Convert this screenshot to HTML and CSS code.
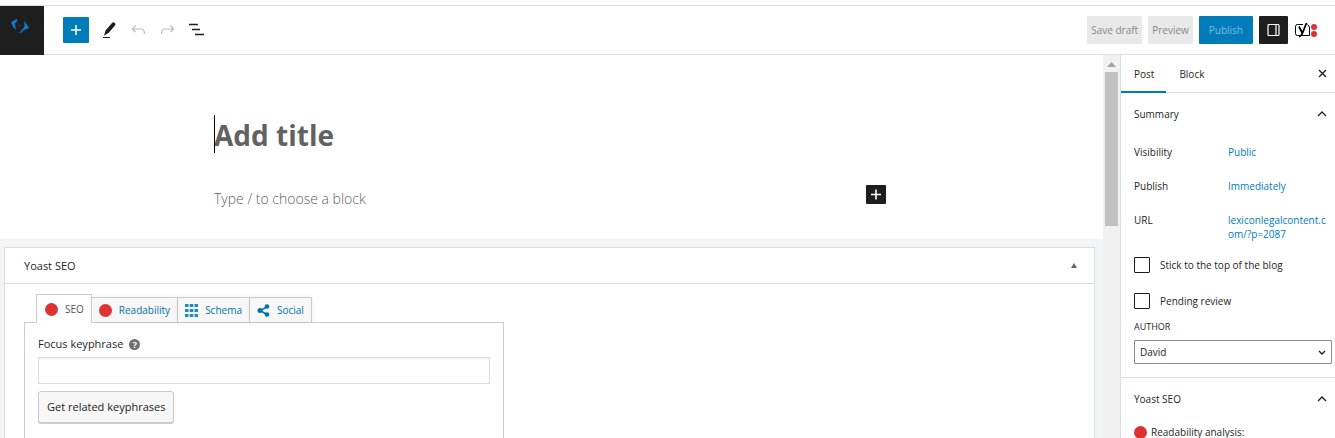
FILE: index.html
```html
<!DOCTYPE html>
<html lang="en">
<head>
    <meta charset="UTF-8">
    <meta name="viewport" content="width=device-width, initial-scale=1.0">
    <title>Add New Post</title>
    <link rel="stylesheet" href="styles.css">
</head>
<body>
    <header class="topbar">
        <a class="logo" href="#" aria-label="View posts">
            <svg width="20" height="16" viewBox="0 0 20 16">
                <path d="M1 4L7 1V3.500L4.500 5.500L6 11.500L3.500 9.500Z" fill="#0d84d0" stroke="#1c4f9c" stroke-width=".5"/>
                <path d="M14.500 3L19 10L14 12L10.500 15L9.500 14.500L11 13L14.500 9Z" fill="#0d84d0" stroke="#1c4f9c" stroke-width=".5"/>
                <path d="M9 7h1v2h-1z" fill="#27348b"/>
            </svg>
        </a>
        <div class="tools">
            <button class="tool add" aria-label="Toggle block inserter">
                <svg width="26" height="26" viewBox="0 0 26 26"><path d="M13 8v10M8 13h10" stroke="#fff" stroke-width="1.500"/></svg>
            </button>
            <button class="tool" aria-label="Tools">
                <svg width="18" height="18" viewBox="0 0 18 18"><path d="M5.500 9.500L12 2Q13 .500 15 2Q16 3 15 4.500L8.500 12L4 14.500Z" fill="#1e1e1e"/><path d="M3 16.500h7" stroke="#1e1e1e"/></svg>
            </button>
            <button class="tool" aria-label="Undo" disabled>
                <svg width="18" height="18" viewBox="0 0 18 18"><path d="M6.500 4.500L3.500 8L6.500 11M4 8h8q3.500 0 3.500 5" fill="none" stroke="#bbb" stroke-width="1.200"/></svg>
            </button>
            <button class="tool" aria-label="Redo" disabled>
                <svg width="18" height="18" viewBox="0 0 18 18"><path d="M12.500 4.500L15.500 8L12.500 11M15 8H7q-3.500 0-3.500 5" fill="none" stroke="#bbb" stroke-width="1.200"/></svg>
            </button>
            <button class="tool" aria-label="List view">
                <svg width="18" height="18" viewBox="0 0 18 18"><path d="M2 3.500h9M5 8.500h8M8 13.500h9" stroke="#1e1e1e" stroke-width="1.400"/></svg>
            </button>
        </div>
        <div class="actions">
            <button class="btn">Save draft</button>
            <button class="btn">Preview</button>
            <button class="btn publish">Publish</button>
            <button class="btn settings" aria-label="Settings">
                <svg width="13" height="14" viewBox="0 0 13 14"><rect x="1" y="1.500" width="11" height="11" rx="1" fill="none" stroke="#fff" stroke-width="1.200"/><path d="M9 1v12" stroke="#fff" stroke-width="1.200"/></svg>
            </button>
            <button class="yoast" aria-label="Yoast SEO">
                <svg width="24" height="16" viewBox="0 0 24 16">
                    <path d="M9 2.500H3.500Q1.500 2.500 1.500 4.500V11.500Q1.500 13.500 3.500 13.500H15.500V6Q15.500 3.500 13.500 2.500" fill="none" stroke="#000"/>
                    <path d="M5 4.500L8 10.500M12.500 1L8.500 11Q7.500 14 5 14.500" fill="none" stroke="#000" stroke-width="1.800"/>
                    <circle cx="20" cy="5" r="3" fill="#dc3232"/>
                    <circle cx="20" cy="12" r="3" fill="#dc3232"/>
                </svg>
            </button>
        </div>
    </header>

    <div class="layout">
        <main class="main">
            <section class="editor">
                <div class="column">
                    <input class="title" type="text" placeholder="Add title" aria-label="Add title">
                    <div class="block">
                        <input class="paragraph" type="text" placeholder="Type / to choose a block" aria-label="Block text">
                        <button class="inserter" aria-label="Add block">
                            <svg width="20" height="19" viewBox="0 0 20 19"><path d="M10 4.500v10M5 9.500h10" stroke="#fff" stroke-width="1.600"/></svg>
                        </button>
                    </div>
                </div>
            </section>
            <section class="metaboxes">
                <div class="metabox">
                    <div class="metabox-head">
                        <h2>Yoast SEO</h2>
                        <button class="toggle" aria-label="Toggle panel">
                            <svg width="8" height="6" viewBox="0 0 8 6"><path d="M4 0L7 5H1z" fill="#666"/></svg>
                        </button>
                    </div>
                    <div class="metabox-body">
                        <div class="tabs">
                            <button class="tab active"><span class="dot"></span>SEO</button>
                            <button class="tab"><span class="dot"></span>Readability</button>
                            <button class="tab">
                                <svg width="13" height="13" viewBox="0 0 13 13" fill="#1e8cbe"><path d="M0 0h3.500v3H0zM4.700 0h3.600v3H4.700zM9.500 0h3.500v3H9.500zM0 5h3.500v3H0zM4.700 5h3.600v3H4.700zM9.500 5h3.500v3H9.500zM0 10h3.500v3H0zM4.700 10h3.600v3H4.700zM9.500 10h3.500v3H9.500z"/></svg>
                                Schema
                            </button>
                            <button class="tab">
                                <svg width="13" height="13" viewBox="0 0 13 13" fill="#0073aa"><path d="M10 3L3 6.500L10 10.500" fill="none" stroke="#0073aa" stroke-width="1.500"/><circle cx="3" cy="6.500" r="2.500"/><circle cx="10" cy="2.500" r="2.300"/><circle cx="10" cy="10.500" r="2.300"/></svg>
                                Social
                            </button>
                        </div>
                        <div class="panel">
                            <div class="field-label">
                                <label for="keyphrase">Focus keyphrase</label>
                                <button class="help" aria-label="Help">?</button>
                            </div>
                            <input class="keyphrase" id="keyphrase" type="text">
                            <button class="related">Get related keyphrases</button>
                        </div>
                    </div>
                </div>
            </section>
        </main>
        <div class="scrollbar">
            <svg width="9" height="5" viewBox="0 0 9 5"><path d="M4.500 0L9 5H0z" fill="#a3a3a3"/></svg>
            <div class="thumb"></div>
        </div>
        <aside class="sidebar">
            <div class="side-tabs">
                <button class="side-tab current">Post</button>
                <button class="side-tab">Block</button>
                <button class="close" aria-label="Close settings">
                    <svg width="9" height="9" viewBox="0 0 9 9"><path d="M1 1l7 7M8 1L1 8" stroke="#1e1e1e" stroke-width="1.400"/></svg>
                </button>
            </div>
            <section class="side-panel">
                <button class="side-head">Summary
                    <svg width="10" height="6" viewBox="0 0 10 6"><path d="M1 5l4-4 4 4" fill="none" stroke="#1e1e1e" stroke-width="1.300"/></svg>
                </button>
                <dl class="summary">
                    <dt>Visibility</dt>
                    <dd><a href="#">Public</a></dd>
                    <dt>Publish</dt>
                    <dd><a href="#">Immediately</a></dd>
                    <dt>URL</dt>
                    <dd><a href="#">lexiconlegalcontent.com/?p=2087</a></dd>
                </dl>
                <label class="check"><input type="checkbox">Stick to the top of the blog</label>
                <label class="check"><input type="checkbox">Pending review</label>
                <label class="author-label" for="author">AUTHOR</label>
                <div class="select">
                    <select id="author">
                        <option>David</option>
                    </select>
                    <svg width="8" height="5" viewBox="0 0 8 5"><path d="M1 1l3 3 3-3" fill="none" stroke="#1e1e1e" stroke-width="1.300"/></svg>
                </div>
            </section>
            <section class="side-panel">
                <button class="side-head">Yoast SEO
                    <svg width="10" height="6" viewBox="0 0 10 6"><path d="M1 5l4-4 4 4" fill="none" stroke="#1e1e1e" stroke-width="1.300"/></svg>
                </button>
                <p class="analysis"><span class="dot"></span>Readability analysis:</p>
            </section>
        </aside>
    </div>
</body>
</html>
```
FILE: styles.css
```css
* { box-sizing: border-box; }
body { margin: 0; height: 100vh; padding-top: 5px; display: flex; flex-direction: column; overflow: hidden; background: #fff; color: #1e1e1e; font-family: "Open Sans", "Noto Sans", sans-serif; font-size: 10px; line-height: 14px; }
button, input, select { font: inherit; color: inherit; margin: 0; }
button { padding: 0; border: 0; background: none; }
svg { display: block; flex: none; }
a { color: #007cba; text-decoration: none; }

.topbar { display: flex; flex: none; align-items: center; height: 50px; border-top: 1px solid #ddd; border-bottom: 1px solid #ddd; }
.logo { width: 44px; height: 49px; margin-bottom: -1px; padding: 12px 10px; background: #1e1e1e; }
.tools { display: flex; align-items: center; gap: 11px; margin-left: 19px; }
.tool.add { background: #007cba; border-radius: 1px; }
.actions { display: flex; align-items: center; gap: 6px; margin-left: auto; padding-right: 17px; }
.btn { height: 28px; padding: 0 4px; background: #e9e9e9; border-radius: 1px; color: #888; }
.publish { padding: 0 10px; background: #007cba; color: #7fbddd; }
.settings { padding: 0 8px; background: #1e1e1e; }

.layout { display: flex; flex: 1; min-height: 0; }
.main { flex: 1; min-width: 0; overflow: hidden; }
.editor { padding: 60px 3px 28px 0; }
.column { max-width: 672px; margin: 0 auto; }
.title { display: block; width: 100%; height: 38px; padding: 2px 0 0; border: 0; border-left: 1px solid #000; outline: 0; font-size: 28px; font-weight: 700; line-height: 36px; text-indent: -1px; }
.title::placeholder, .paragraph::placeholder { color: #626262; opacity: 1; }
.block { display: flex; align-items: flex-start; margin-top: 32px; }
.paragraph { flex: 1; height: 26px; padding: 0; border: 0; outline: 0; font-size: 14px; font-weight: 300; }
.inserter { background: #1e1e1e; border-radius: 1px; }

.metaboxes { padding: 8px 8px 0 4px; background: #f3f4f5; }
.metabox { min-height: 240px; background: #fff; border: 1px solid #ddd; }
.metabox-head { display: flex; align-items: center; justify-content: space-between; height: 36px; padding: 0 16px 0 19px; border-bottom: 1px solid #ddd; }
.metabox-head h2 { margin: 0; font-size: 11px; font-weight: 500; }
.metabox-body { padding: 10px 19px 0; }
.dot { flex: none; width: 13px; height: 13px; border-radius: 50%; background: #dc3232; }
.tabs { display: flex; align-items: flex-end; padding-left: 12px; }
.tab { display: flex; align-items: center; gap: 7px; height: 25px; padding: 0 7px; background: #f7f7f7; border: 1px solid #ccc; border-width: 1px 1px 0 0; color: #0073aa; box-shadow: 0 0 5px rgba(0, 0, 0, 0.08); }
.tab.active { height: 29px; margin-bottom: -1px; padding: 0 7px 0 8px; background: #fff; border-left-width: 1px; color: #555; box-shadow: none; z-index: 1; }
.panel { max-width: 480px; height: 130px; padding: 14px 13px; border: 1px solid #ccc; }
.field-label { display: flex; align-items: center; gap: 6px; font-size: 11px; }
.help { width: 11px; height: 11px; border-radius: 50%; background: #707070; color: #fff; font-size: 9px; font-weight: 700; line-height: 11px; }
.keyphrase { display: block; width: 100%; height: 27px; margin: 6px 0 7px; padding: 0 6px; border: 1px solid #ddd; box-shadow: inset 0 1px 2px rgba(0, 0, 0, 0.07); }
.related { height: 32px; padding: 0 8px; background: #f7f7f7; border: 1px solid #ccc; border-radius: 3px; box-shadow: 0 1px 0 #ccc; color: #222; font-size: 11px; }

.scrollbar { display: flex; flex-direction: column; align-items: center; gap: 5px; width: 17px; padding-top: 7px; background: #f1f1f1; }
.thumb { width: 13px; height: 154px; background: #c1c1c1; }

.sidebar { width: 215px; overflow: hidden; border-left: 1px solid #ddd; }
.side-tabs { display: flex; height: 38px; border-bottom: 1px solid #ddd; }
.side-tab { height: 38px; padding: 0 12px 0 13px; }
.side-tab.current { border-bottom: 2px solid #007cba; padding-top: 2px; }
.close { margin-left: auto; padding-right: 8px; }
.side-panel { padding: 14px 3px 13px 13px; border-bottom: 1px solid #ddd; }
.side-head { display: flex; align-items: center; justify-content: space-between; width: 100%; padding-right: 5px; font-weight: 500; line-height: 14px; }
.summary { display: grid; grid-template-columns: 94px 100px; row-gap: 20px; margin: 24px 0 16px; }
.summary dd { margin: 0; word-break: break-all; }
.check { display: flex; align-items: center; gap: 10px; margin-bottom: 20px; }
.check input { appearance: none; width: 16px; height: 16px; background: #fff; border: 1px solid #1e1e1e; border-radius: 1px; }
.author-label { display: block; margin: -9px 0 6px; font-size: 9px; }
.select { display: grid; align-items: center; }
.select select { grid-area: 1 / 1; width: 100%; height: 24px; padding: 0 5px; appearance: none; background: #fff; border: 1px solid #8c8c8c; border-radius: 1px; }
.select svg { grid-area: 1 / 1; justify-self: end; margin-right: 6px; pointer-events: none; }
.analysis { display: flex; align-items: center; gap: 4px; margin: 19px 0 0; }
```
